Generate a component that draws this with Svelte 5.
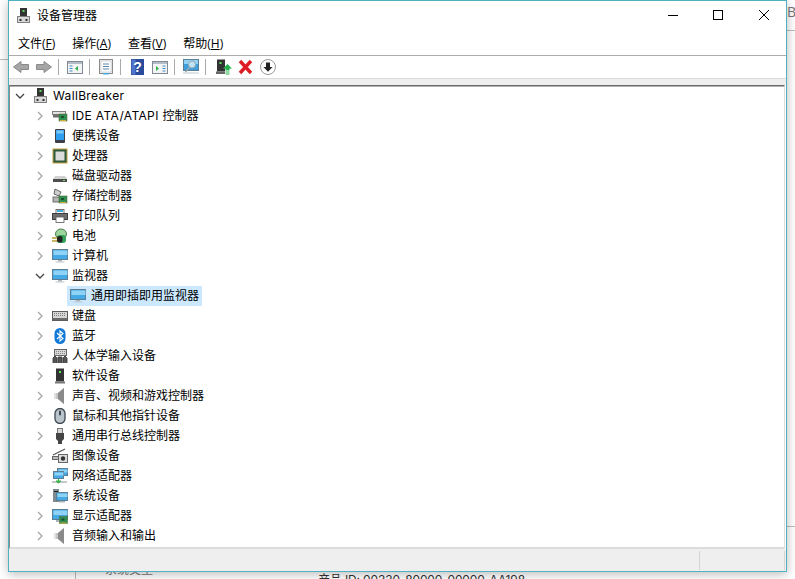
<script>
	const devices = [
		{ icon: 'ide', latin: 'IDE ATA/ATAPI ', label: '控制器' },
		{ icon: 'portable', label: '便携设备' },
		{ icon: 'cpu', label: '处理器' },
		{ icon: 'disk', label: '磁盘驱动器' },
		{ icon: 'storage', label: '存储控制器' },
		{ icon: 'printer', label: '打印队列' },
		{ icon: 'battery', label: '电池' },
		{ icon: 'monitor', label: '计算机' },
		{ icon: 'monitor', label: '监视器', open: true, children: ['通用即插即用监视器'] },
		{ icon: 'keyboard', label: '键盘' },
		{ icon: 'bluetooth', label: '蓝牙' },
		{ icon: 'hid', label: '人体学输入设备' },
		{ icon: 'software', label: '软件设备' },
		{ icon: 'speaker', label: '声音、视频和游戏控制器' },
		{ icon: 'mouse', label: '鼠标和其他指针设备' },
		{ icon: 'usb', label: '通用串行总线控制器' },
		{ icon: 'camera', label: '图像设备' },
		{ icon: 'network', label: '网络适配器' },
		{ icon: 'system', label: '系统设备' },
		{ icon: 'display', label: '显示适配器' },
		{ icon: 'speaker', label: '音频输入和输出' }
	];

	const menus = [
		['文件(', 'F', ')'],
		['操作(', 'A', ')'],
		['查看(', 'V', ')'],
		['帮助(', 'H', ')']
	];
</script>

{#snippet pc()}
	<svg class="ico" viewBox="0 0 16 16">
		<rect x="4" y="0" width="7" height="9" fill="#333" />
		<rect x="6.500" y="2" width="2" height="2" fill="#5fd35f" />
		<rect x="1.500" y="8.500" width="12" height="6" fill="#d8d8d8" stroke="#808080" />
		<rect x="3.500" y="11" width="2" height="2" fill="#333" />
		<rect x="9.500" y="11" width="2" height="2" fill="#333" />
	</svg>
{/snippet}

{#snippet screen(x, y, w, h)}
	<rect {x} {y} width={w} height={h} fill="#45a9e6" stroke="#5b7e93" />
	<rect x={x + 1} y={y + 1} width={w - 1} height={(h - 1) / 2} fill="#8ed2f5" />
{/snippet}

{#snippet board(x, y)}
	<rect {x} {y} width="8" height="7" fill="#2f8f52" stroke="#5a6b3a" stroke-width="0.6" />
	<rect x={x + 2} y={y + 2} width="3" height="2" fill="#1b4f30" />
	<rect x={x + 1} y={y + 6} width="6" height="1" fill="#d6b23a" />
{/snippet}

{#snippet icon(name)}
	<svg class="ico" viewBox="0 0 16 16">
		{#if name === 'ide'}
			<rect x="0.500" y="3.500" width="13" height="3" fill="#e3e3e3" stroke="#808080" />
			<rect x="1" y="6.500" width="6" height="3" fill="#6f6f6f" />
			{@render board(7, 6)}
		{:else if name === 'portable'}
			<rect x="3" y="1" width="10" height="14" rx="1" fill="#3d4046" />
			<rect x="4" y="2" width="8" height="10" fill="#2f9ef0" />
			<rect x="4.500" y="2.500" width="7" height="3" fill="#7cc8f7" />
		{:else if name === 'cpu'}
			<rect x="0.500" y="0.500" width="15" height="15" fill="#c2a24a" />
			<rect x="1.500" y="1.500" width="13" height="13" fill="#2c5a3a" />
			<rect x="3.500" y="3.500" width="9" height="9" fill="#dcdcdc" />
		{:else if name === 'disk'}
			<path d="M3 8h10l2 3v3H1v-3z" fill="#d2d2d2" />
			<rect x="1" y="11" width="14" height="3" fill="#4d4d4d" />
			<rect x="11" y="12" width="2" height="1" fill="#6fe06f" />
		{:else if name === 'storage'}
			<path d="M3 1l6 3-2 4-5-2z" fill="#cfcfcf" stroke="#444" stroke-width="0.8" />
			<rect x="1" y="9" width="8" height="5" fill="#b5b5b5" stroke="#555" stroke-width="0.8" />
			{@render board(7, 8)}
		{:else if name === 'printer'}
			<rect x="4" y="1.500" width="8" height="4" fill="#fff" stroke="#555" stroke-width="0.8" />
			<rect x="5" y="2" width="6" height="2" fill="#44b0e0" />
			<rect x="0.500" y="5.500" width="15" height="6" fill="#6d6d6d" stroke="#3f3f3f" />
			<rect x="4" y="9" width="8" height="5.500" fill="#fff" stroke="#555" stroke-width="0.8" />
		{:else if name === 'battery'}
			<ellipse cx="9" cy="6" rx="5.500" ry="5" fill="#9ed59e" stroke="#4d7d4d" />
			<rect x="5" y="7" width="9" height="8" rx="3" fill="#33a35a" />
			<path d="M0 10h6M0 13h6" stroke="#b89a2c" stroke-width="1.400" />
			<rect x="5" y="8" width="5.500" height="6.500" rx="2" fill="#222" />
		{:else if name === 'monitor'}
			{@render screen(0.5, 1.5, 15, 10)}
			<rect x="6" y="12" width="4" height="1.500" fill="#a9b4bb" />
			<rect x="3.500" y="13.500" width="9" height="1" fill="#bfc6cb" />
		{:else if name === 'keyboard'}
			<rect x="0.500" y="3.500" width="15" height="9" fill="#d6d6d6" stroke="#5c5c5c" />
			<path d="M2 5.500h12M2 7.500h12" stroke="#7b7b7b" stroke-dasharray="1 1" />
			<rect x="1" y="10" width="14" height="2" fill="#6b6b6b" />
		{:else if name === 'bluetooth'}
			<rect x="2.500" y="0" width="11" height="16" rx="5.500" fill="#1179d6" />
			<path d="M5 5l6 5.500L8 13V3l3 2.500-6 5.500" fill="none" stroke="#fff" stroke-width="1.100" />
		{:else if name === 'hid'}
			<rect x="2.500" y="1.500" width="12" height="6" fill="#d6d6d6" stroke="#666" />
			<path d="M4 3.500h9M4 5.500h9" stroke="#888" stroke-dasharray="1 1" />
			<path d="M1 15V10l2-2 2 2v5M6 15V9h4v6M11 15v-5l2-2 2 2v5" fill="#555" stroke="#333" stroke-width="0.8" />
		{:else if name === 'software'}
			<rect x="4" y="0.500" width="8" height="13" fill="#333" />
			<rect x="7" y="3" width="2" height="2" fill="#5fe05f" />
			<rect x="3" y="13.500" width="10" height="2" fill="#777" />
		{:else if name === 'speaker'}
			<path d="M2 5h4l6-5v16l-6-5H2z" fill="#c6c6c6" />
			<path d="M6 5l6-5v16l-6-5z" fill="#8a8a8a" />
			<rect x="2" y="5" width="2" height="6" fill="#e0e0e0" />
		{:else if name === 'mouse'}
			<rect x="3" y="0.500" width="10" height="15" rx="5" fill="#b9c3cb" stroke="#3f4850" stroke-width="1.300" />
			<rect x="7" y="2.500" width="2" height="5" rx="1" fill="#3f4850" />
		{:else if name === 'usb'}
			<rect x="5.500" y="0.500" width="5" height="5" fill="#d8d8d8" stroke="#777" />
			<path d="M4 5h8v6l-2 2v3H6v-3l-2-2z" fill="#454545" />
		{:else if name === 'camera'}
			<path d="M1 7L13 1" stroke="#555" stroke-width="1.200" />
			<rect x="0.500" y="8.500" width="6" height="3" fill="#bbb" stroke="#666" />
			<rect x="6.500" y="6.500" width="9" height="8" fill="#ddd" stroke="#666" />
			<circle cx="11" cy="10.500" r="2.200" fill="#333" />
		{:else if name === 'network'}
			{@render screen(5.5, 0.5, 10, 7)}
			{@render screen(1.5, 3.5, 10, 7)}
			<rect x="0" y="13" width="15" height="2" fill="#c8c8c8" />
			<path d="M6.500 11v2M4 13h5l-2.500 2z" fill="#38b048" stroke="#38b048" />
		{:else if name === 'system'}
			<rect x="1" y="1" width="6" height="13" fill="#7f8a90" />
			<rect x="2" y="3" width="4" height="1" fill="#222" />
			{@render screen(4.5, 4.5, 11, 8)}
			<rect x="7" y="13" width="6" height="1.500" fill="#a9b4bb" />
		{:else if name === 'display'}
			{@render screen(0.5, 1.5, 15, 10)}
			<rect x="4" y="12" width="4" height="2" fill="#a9b4bb" />
			{@render board(7.5, 8.5)}
		{/if}
	</svg>
{/snippet}

<div class="desktop">
	<span class="bg-word">Be</span>
	<div class="bg-line one"></div>
	<div class="bg-line two"></div>
	<div class="bg-line three"></div>
	<div class="bg-rule"></div>
	<span class="bg-id">产品 ID: 00330-80000-00000-AA198</span>
	<span class="bg-faint">系统类型</span>

	<div class="window">
		<header class="titlebar">
			<span class="title-ico">{@render pc()}</span>
			<span class="title">设备管理器</span>
			<div class="controls">
				<svg viewBox="0 0 10 10"><path d="M0 5.500h10" stroke="#000" /></svg>
				<svg viewBox="0 0 10 10"><rect x="0.500" y="0.500" width="9" height="9" fill="none" stroke="#000" /></svg>
				<svg viewBox="0 0 10 10"><path d="M0 0l10 10M10 0L0 10" stroke="#000" /></svg>
			</div>
		</header>

		<nav class="menubar">
			{#each menus as m}
				<span class="menu">{m[0]}<u>{m[1]}</u>{m[2]}</span>
			{/each}
		</nav>

		<div class="toolbar">
			<svg class="tool first" viewBox="0 0 16 16"><path d="M0.500 8L8 2.500V5.500h7.500v5H8v3z" fill="#a6a6a6" stroke="#8a8a8a" /></svg>
			<svg class="tool" viewBox="0 0 16 16"><path d="M15.500 8L8 2.500V5.500H.500v5H8v3z" fill="#a6a6a6" stroke="#8a8a8a" /></svg>
			<i class="sep"></i>
			<svg class="tool" viewBox="0 0 16 16">
				<rect x="0.500" y="2.500" width="15" height="12" fill="#f4f4f4" stroke="#7f8a96" />
				<rect x="1" y="3" width="14" height="2" fill="#b4bcc6" />
				<path d="M11 7v5L8 9.500z" fill="#2fb34a" />
				<path d="M2.500 7h3M2.500 9.500h3M2.500 12h3" stroke="#3f8dc8" />
			</svg>
			<i class="sep"></i>
			<svg class="tool" viewBox="0 0 16 16">
				<rect x="1.500" y="0.500" width="13" height="14" fill="#eef1f4" stroke="#8b8b8b" />
				<rect x="3" y="2" width="10" height="11" fill="#fff" stroke="#b5b5b5" stroke-width="0.500" />
				<path d="M5 5h6M5 7.500h6M5 10h6" stroke="#5a87ad" />
				<rect x="5" y="14" width="6" height="1.500" fill="#46a9e0" />
			</svg>
			<i class="sep wide"></i>
			<svg class="tool" viewBox="0 0 16 16">
				<rect x="1" y="0" width="13" height="16" fill="#2a4a9c" />
				<rect x="1.500" y="0.500" width="4" height="15" fill="#4f74c9" />
				<text x="7.500" y="13" text-anchor="middle" class="qmark">?</text>
			</svg>
			<svg class="tool" viewBox="0 0 16 16">
				<rect x="0.500" y="2.500" width="15" height="12" fill="#f4f4f4" stroke="#7f8a96" />
				<rect x="1" y="3" width="14" height="2" fill="#b4bcc6" />
				<path d="M4 7v5l3-2.500z" fill="#2fb34a" />
				<path d="M10.500 7h3M10.500 9.500h3M10.500 12h3" stroke="#3f8dc8" />
			</svg>
			<i class="sep"></i>
			<svg class="tool" viewBox="0 0 16 16">
				<rect x="0.500" y="0.500" width="15" height="11" fill="#3f9fdc" stroke="#5b7e93" />
				<rect x="1" y="1" width="14" height="4" fill="#8ed2f5" />
				<circle cx="9" cy="5.500" r="3.500" fill="#bfe3f7" stroke="#9aa6ae" />
				<path d="M6.500 8.500L2.500 13" stroke="#9aa6ae" stroke-width="1.500" />
				<rect x="0" y="13.500" width="16" height="1" fill="#c2c8cc" />
			</svg>
			<i class="sep"></i>
			<svg class="tool gap" viewBox="0 0 16 16">
				<rect x="1" y="0.500" width="8" height="12" fill="#333" />
				<rect x="3.500" y="3" width="2" height="2" fill="#5fe05f" />
				<rect x="0" y="12.500" width="9" height="2.500" fill="#666" />
				<path d="M11.500 5l4.500 4.500h-2.500v2h-4v-2H7z" fill="#23b14d" />
				<rect x="9.500" y="12.500" width="4" height="1" fill="#23b14d" />
				<rect x="9.500" y="14.500" width="4" height="1" fill="#23b14d" />
			</svg>
			<svg class="tool" viewBox="0 0 16 16"><path d="M2 2l11 12M13 2L2 14" stroke="#dd1c24" stroke-width="3.400" /></svg>
			<svg class="tool" viewBox="0 0 16 16">
				<circle cx="8" cy="8" r="7.500" fill="#fff" stroke="#9a9a9a" />
				<path d="M6 3.500h4v4.500h2.500L8 12.800 3.500 8H6z" fill="#222" />
			</svg>
		</div>

		<div class="strip"></div>

		<div class="tree">
			<div class="row root">
				<svg class="chev" viewBox="0 0 10 10"><path d="M1 3l4 4 4-4" fill="none" stroke="#444" stroke-width="1.300" /></svg>
				{@render pc()}
				<span class="label latin">WallBreaker</span>
			</div>
			{#each devices as d}
				<div class="row">
					{#if d.open}
						<svg class="chev" viewBox="0 0 10 10"><path d="M1 3l4 4 4-4" fill="none" stroke="#444" stroke-width="1.300" /></svg>
					{:else}
						<svg class="chev" viewBox="0 0 10 10"><path d="M3 1l4 4-4 4" fill="none" stroke="#a6a6a6" stroke-width="1.300" /></svg>
					{/if}
					{@render icon(d.icon)}
					<span class="label">{#if d.latin}<span class="latin">{d.latin}</span>{/if}{d.label}</span>
				</div>
				{#if d.children}
					{#each d.children as child}
						<div class="row leaf">
							<div class="selected">
								{@render icon(d.icon)}
								<span class="label">{child}</span>
							</div>
						</div>
					{/each}
				{/if}
			{/each}
		</div>

		<footer class="status">
			<i></i>
			<i></i>
		</footer>
	</div>
</div>

<style>
	:global(body) {
		margin: 0;
		background: #fff;
	}

	.desktop {
		position: relative;
		width: 795px;
		height: 579px;
		overflow: hidden;
		background: #fff;
		font-family: "Open Sans", "Noto Sans CJK SC", sans-serif;
		font-size: 12px;
		color: #000;
	}

	.bg-word {
		position: absolute;
		left: 787px;
		top: 2px;
		font-size: 14px;
		color: #777;
	}

	.bg-line {
		position: absolute;
		height: 1px;
		background: #bdbdbd;
	}

	.one {
		left: 0;
		top: 59px;
		width: 8px;
	}

	.two {
		left: 787px;
		top: 30px;
		width: 8px;
	}

	.three {
		left: 787px;
		top: 526px;
		width: 8px;
	}

	.bg-rule {
		position: absolute;
		left: 75px;
		top: 572px;
		width: 1px;
		height: 7px;
		background: #bdbdbd;
	}

	.bg-id {
		position: absolute;
		left: 318px;
		top: 573px;
		font-family: Inter, "Noto Sans CJK SC", sans-serif;
		letter-spacing: -0.15px;
		line-height: 14px;
		color: #333;
	}

	.bg-faint {
		position: absolute;
		left: 105px;
		top: 563px;
		line-height: 14px;
		color: #777;
	}

	.window {
		position: absolute;
		left: 8px;
		top: 0;
		width: 779px;
		height: 572px;
		box-sizing: border-box;
		display: flex;
		flex-direction: column;
		background: #fff;
		border: 1px solid #4fb0bf;
		box-shadow: 0 2px 10px rgba(0, 0, 0, 0.28);
	}

	.titlebar {
		height: 29px;
		flex: none;
		display: flex;
		align-items: center;
		padding: 0 0 1px 7px;
	}

	.title-ico {
		display: flex;
		margin-right: 5px;
	}

	.title {
		line-height: 16px;
	}

	.controls {
		margin-left: auto;
		display: flex;
		gap: 35px;
		padding-right: 17px;
		margin-top: -1px;
	}

	.controls svg {
		width: 10px;
		height: 10px;
		display: block;
	}

	.controls svg:last-child {
		margin-left: 1px;
	}

	.menubar {
		height: 24px;
		flex: none;
		display: flex;
		align-items: center;
		gap: 17px;
		padding-left: 9px;
		border-bottom: 1px solid #acacac;
	}

	.toolbar {
		height: 22px;
		flex: none;
		display: flex;
		align-items: center;
		padding-left: 4px;
		border-bottom: 1px solid #dcdcdc;
	}

	.tool {
		width: 16px;
		height: 16px;
		flex: none;
		margin-right: 6px;
	}

	.tool.first {
		margin-right: 7px;
	}

	.tool.gap {
		margin-left: 2px;
	}

	.qmark {
		font-family: "Liberation Sans", sans-serif;
		font-size: 14px;
		font-weight: 700;
		fill: #fff;
	}

	.sep {
		width: 1px;
		height: 16px;
		flex: none;
		background: #a9a9a9;
		margin-right: 8px;
	}

	.sep.wide {
		margin-right: 9px;
	}

	.strip {
		height: 6px;
		flex: none;
		background: #efefef;
	}

	.tree {
		flex: 1;
		margin-right: 1px;
		border-top: 1px solid #6b6b6b;
		border-left: 1px solid #8a8a8a;
		border-right: 1px solid #dcdcdc;
		border-bottom: 2px solid #dcdcdc;
		overflow: hidden;
		background: #fff;
		box-shadow: inset 0 1px #b0b0b0;
	}

	.row {
		height: 20px;
		display: flex;
		align-items: center;
		padding-left: 25px;
	}

	.row.root {
		padding-left: 5px;
	}

	.root .chev {
		margin-right: 8px;
	}

	.row.leaf {
		padding-left: 57px;
	}

	.selected {
		height: 20px;
		display: flex;
		align-items: center;
		padding: 0 3px;
		background: #cce8ff;
	}

	.chev {
		width: 10px;
		height: 10px;
		flex: none;
		margin-right: 7px;
	}

	.ico {
		width: 16px;
		height: 16px;
		flex: none;
		display: block;
	}

	.label {
		margin-left: 4px;
		line-height: 16px;
		white-space: pre;
		font-family: Inter, "Noto Sans CJK SC", sans-serif;
	}

	.latin {
		letter-spacing: 0.35px;
	}

	.selected .label {
		margin-left: 5px;
	}

	.status {
		height: 22px;
		flex: none;
		box-sizing: border-box;
		background: #efefef;
		display: flex;
		justify-content: flex-end;
		gap: 84px;
		padding: 2px 1px 0 0;
	}

	.status i {
		width: 1px;
		height: 19px;
		background: #d4d4d4;
	}
</style>
